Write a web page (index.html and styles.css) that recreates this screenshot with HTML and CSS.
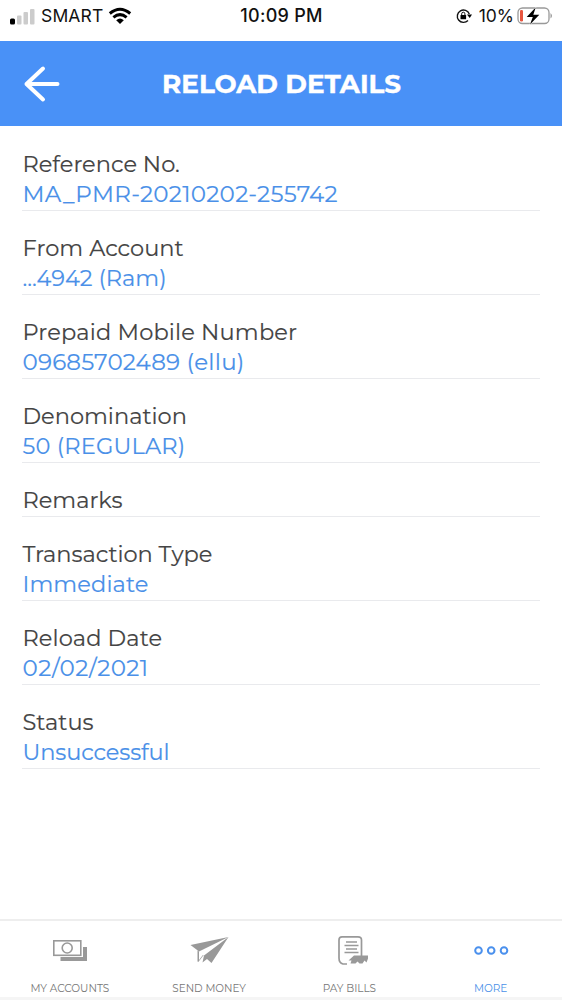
FILE: index.html
```html
<!DOCTYPE html>
<html lang="en">
<head>
<meta charset="utf-8">
<title>Reload Details</title>
<link rel="stylesheet" href="styles.css">
</head>
<body>
<div class="screen">
  <div class="status">
    <div class="carrier">
      <svg class="signal" width="26" height="17" viewBox="0 0 26 17"><rect x="0" y="10.500" width="5" height="6" rx="1.500" fill="#000"/><g fill="#ccc"><rect x="7" y="7.500" width="4.500" height="9" rx="1"/><rect x="13.500" y="4" width="4.500" height="12.500" rx="1"/><rect x="20" y="1" width="4.500" height="15.500" rx="1"/></g></svg>
      <span class="network">SMART</span>
      <svg width="24" height="18" viewBox="0 0 24 18" fill="none" stroke="#000" stroke-width="3"><path d="M1.800 6.500Q12 -2 22.200 6.500"/><path d="M5.400 10.300Q12 5 18.600 10.300"/><path d="M8.200 13.200Q12 10 15.800 13.200L12 17Z" fill="#000" stroke="none"/></svg>
    </div>
    <span class="time">10:09 PM</span>
    <div class="power">
      <svg width="17" height="16" viewBox="0 0 17 16"><path d="M12 12.500A6.200 6.200 0 1 1 13.300 6" fill="none" stroke="#111" stroke-width="1.400"/><path d="M11 6.500h5l-2.300 3.600z"/><rect x="4.500" y="7" width="5.600" height="4.200" rx=".5"/><path d="M5.700 7.200V5.800a1.600 1.600 0 0 1 3.200 0v1.400" fill="none" stroke="#111" stroke-width="1"/></svg>
      <span class="percent">10%</span>
      <svg width="36" height="20" viewBox="0 0 36 20"><rect x="1" y="2" width="31" height="15.500" rx="4.500" fill="#fff" stroke="#999" stroke-width="1.300"/><rect x="3" y="4" width="3" height="11.500" rx="1.200" fill="#e8563f"/><path d="M33.500 7v5.500q3-2.750 0-5.500" fill="#999"/><path d="M18.800 1.200L9.700 10.900h6.100L13 18.500L22.300 8.700h-6z" fill="#000" stroke="#fff" stroke-width="1" paint-order="stroke"/></svg>
    </div>
  </div>
  <header class="header">
    <svg class="back" width="38" height="38" viewBox="0 0 38 38" fill="none" stroke="#fff" stroke-width="4" stroke-linecap="round" stroke-linejoin="round"><path d="M35.500 19H4.500M21 3.500L4.500 19L21 34.500"/></svg>
    <h1 class="title">RELOAD DETAILS</h1>
  </header>
  <main class="details">
    <div class="item"><div class="label">Reference No.</div><div class="value reference-value">MA_PMR-20210202-255742</div></div>
    <div class="item"><div class="label">From Account</div><div class="value">...4942 (Ram)</div></div>
    <div class="item"><div class="label mobile">Prepaid Mobile Number</div><div class="value mobile-value">09685702489 (ellu)</div></div>
    <div class="item"><div class="label">Denomination</div><div class="value amount-value">50 (REGULAR)</div></div>
    <div class="item"><div class="label">Remarks</div></div>
    <div class="item"><div class="label type">Transaction Type</div><div class="value immediate">Immediate</div></div>
    <div class="item"><div class="label date">Reload Date</div><div class="value date-value">02/02/2021</div></div>
    <div class="item"><div class="label">Status</div><div class="value state-value">Unsuccessful</div></div>
  </main>
  <nav class="tabs">
    <div class="tab"><svg width="40" height="32" viewBox="0 0 40 32"><rect x="3.800" y="5.800" width="27" height="14.500" fill="none" stroke="#999" stroke-width="1.600"/><circle cx="17.200" cy="13" r="5" fill="none" stroke="#999" stroke-width="1.600"/><path d="M33 12h4v14H10.500v-4H33z" fill="#999"/></svg><span class="tab-name">MY ACCOUNTS</span></div>
    <div class="tab"><svg width="40" height="32" viewBox="0 0 40 32" fill="#999"><path d="M.5 10L38.500 2L9 16.500Z"/><path d="M38.500 2L21.500 28L17 24L12.500 27.500L14 20.500Z"/><path d="M7.500 15.500L9 16.500V26.500H7.500Z"/><path d="M8.300 26.500L13.300 20" stroke="#999" stroke-width=".8"/></svg><span class="tab-name send">SEND MONEY</span></div>
    <div class="tab"><svg width="40" height="32" viewBox="0 0 40 32"><path d="M18 29H14Q10 28 10 23V5Q10 1.800 13 1.800H29Q32.500 1.800 32.500 5V21" fill="none" stroke="#999" stroke-width="1.700"/><path d="M17 7h11M15.500 10.500h14M17 14h11M15.500 17.500h14" stroke="#999" stroke-width="1.400"/><path d="M25 20.500h14v3l-1.500 4-2-2-2 3h-3l-2-2-2 2h-5l1-3h-3z" fill="#999"/></svg><span class="tab-name">PAY BILLS</span></div>
    <div class="tab"><svg width="40" height="32" viewBox="0 0 40 32" fill="none" stroke="#4a90ed" stroke-width="2"><circle cx="9.500" cy="15.500" r="3.300"/><circle cx="22.200" cy="15.500" r="3.300"/><circle cx="35" cy="15.500" r="3.300"/></svg><span class="tab-name more">MORE</span></div>
  </nav>
</div>
</body>
</html>
```
FILE: styles.css
```css
* { box-sizing: border-box; }
body { margin: 0; background: #fff; font-family: Montserrat, Inter, sans-serif; }
svg { display: block; flex-shrink: 0; }
.screen { height: 1000px; display: flex; flex-direction: column; }
.status { height: 41px; display: grid; grid-template-columns: 1fr auto 1fr; align-items: start; padding: 6px 9px 0 10px; font-family: Inter, sans-serif; font-size: 17.5px; line-height: 20px; color: #111; }
.carrier, .power { display: flex; align-items: center; }
.carrier { gap: 5px; }
.network { letter-spacing: 0.15px; }
.time { font-weight: 500; font-size: 18px; letter-spacing: 0.25px; }
.power { justify-content: flex-end; }
.percent { margin: 0 3px 0 6px; }
.header { height: 85px; flex: none; background: #4991f7; display: grid; grid-template-columns: 60px 1fr 60px; align-items: center; color: #fff; }
.back { margin-left: 22px; }
.title { margin: 0; padding: 1px 0 0 1px; text-align: center; font-size: 26.2px; line-height: 32px; font-weight: 700; white-space: nowrap; -webkit-text-stroke: 0.4px #fff; }
.details { flex: 1; display: flex; flex-direction: column; gap: 22px; padding: 23px 22px 0; }
.item { padding: 0 0 1px; border-bottom: 1px solid #e9eaed; }
.label, .value { padding-left: 0.5px; font-size: 22.5px; line-height: 30px; white-space: nowrap; color: #444; -webkit-text-stroke: 0.15px currentColor; }
.value { color: #4a90e8; }
.mobile { letter-spacing: 0.17px; }
.type { letter-spacing: -0.05px; }
.date, .immediate { letter-spacing: 0.1px; }
.reference-value { font-size: 23px; letter-spacing: 0.3px; }
.mobile-value { font-size: 23px; letter-spacing: 0.2px; }
.amount-value { letter-spacing: 0.2px; }
.date-value { font-size: 23px; letter-spacing: 0.45px; }
.state-value { letter-spacing: -0.12px; }
.tabs { height: 81px; border-top: 2px solid #eee; border-bottom: 3px solid #f5f5f5; display: grid; grid-template-columns: repeat(4, 1fr); padding-right: 3px; }
.tab { display: flex; flex-direction: column; align-items: center; padding-top: 14px; gap: 13px; }
.tab-name { font-size: 10.5px; line-height: 18px; color: #777; }
.send { font-size: 10.4px; margin-right: 1px; }
.more { font-size: 10.5px; color: #4a90e8; padding-left: 3px; }
```
